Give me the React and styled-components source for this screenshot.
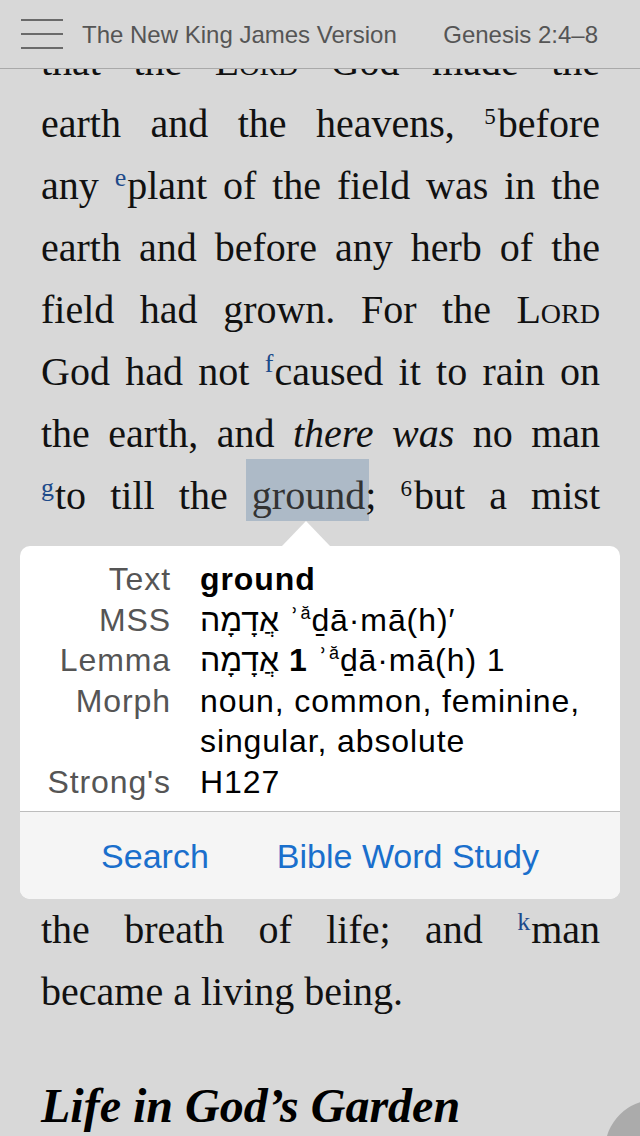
import React from 'react';
import styled, { createGlobalStyle } from 'styled-components';

const GlobalStyle = createGlobalStyle`
  html, body {
    margin: 0;
    padding: 0;
    background: #d8d8d8;
  }
`;

const Page = styled.div`
  position: relative;
  width: 640px;
  height: 1136px;
  overflow: hidden;
  background: #d8d8d8;
`;

const Header = styled.header`
  position: absolute;
  top: 0;
  left: 0;
  right: 0;
  z-index: 5;
  height: 69px;
  box-sizing: border-box;
  display: flex;
  align-items: center;
  padding: 2px 42px 0 21px;
  background: #d8d8d8;
  border-bottom: 1px solid #a9a9a9;
  font-family: "Liberation Sans", Arial, sans-serif;
  font-size: 24px;
  color: #555;
`;

const Menu = styled.svg`
  flex: none;
  margin: -2px 19px 0 0;
`;

const Title = styled.div`
  flex: 1;
`;

const Ref = styled.div`
  flex: none;
`;

const Article = styled.article`
  padding: 31px 40px 0 41px;
  font-family: "Liberation Serif", "Times New Roman", serif;
  font-size: 40px;
  color: #111;
`;

const Line = styled.div`
  height: 62px;
  line-height: 62px;
  white-space: nowrap;
  text-align: ${props => props.$last ? 'left' : 'justify'};
  text-align-last: ${props => props.$last ? 'left' : 'justify'};
`;

// lines that sit fully under the popover
const Covered = styled.div`
  height: ${props => props.$lines * 62}px;
`;

const Verse = styled.sup`
  font-size: 23px;
  line-height: 0;
  vertical-align: 13px;
  margin-right: 2px;
  color: #111;
`;

const Note = styled.sup`
  font-size: 26px;
  line-height: 0;
  vertical-align: 13px;
  margin-right: 1px;
  color: #1d4a8a;
`;

const Lord = styled.span`
  font-variant: small-caps;
`;

const Em = styled.em`
  font-style: italic;
`;

const Mark = styled.span`
  background: #adbac7;
  color: #333;
  padding: 14px 4px 3px 6px;
  margin: 0 -4px 0 -6px;
`;

const Heading = styled.h2`
  margin: 53px 0 0;
  font-family: "Liberation Serif", "Times New Roman", serif;
  font-weight: bold;
  font-style: italic;
  font-size: 48px;
  line-height: 60px;
  color: #000;
`;

const Popover = styled.div`
  position: absolute;
  z-index: 4;
  left: 20px;
  top: 546px;
  width: 600px;
  border-radius: 10px;
  background: #fff;
  font-family: "Liberation Sans", Arial, "DejaVu Sans", sans-serif;
`;

const Arrow = styled.div`
  position: absolute;
  top: -25px;
  left: 262px;
  width: 0;
  height: 0;
  border-left: 24px solid transparent;
  border-right: 24px solid transparent;
  border-bottom: 25px solid #fff;
`;

const Details = styled.div`
  display: grid;
  grid-template-columns: 151px 1fr;
  column-gap: 29px;
  padding: 13px 0 9px;
  font-size: 32px;
  line-height: 40.5px;
  letter-spacing: 0.9px;
  border-bottom: 1px solid #bdbdbd;
`;

const Label = styled.div`
  text-align: right;
  color: #555;
`;

const Value = styled.div`
  color: #000;
  font-weight: ${props => props.$bold ? 'bold' : 'normal'};
`;

const Hebrew = styled.span`
  direction: rtl;
  unicode-bidi: isolate;
  letter-spacing: 0;
`;

const Bold = styled.b`
  font-weight: bold;
`;

const Small = styled.sup`
  font-size: 18px;
  line-height: 0;
  vertical-align: 12px;
`;

const Actions = styled.div`
  display: flex;
  justify-content: center;
  align-items: center;
  gap: 68px;
  height: 87px;
  padding-top: 2px;
  box-sizing: border-box;
  background: #f5f5f5;
  border-radius: 0 0 10px 10px;
`;

const Action = styled.button`
  border: 0;
  padding: 0;
  background: none;
  font-family: "Liberation Sans", Arial, sans-serif;
  font-size: 34px;
  color: #1a6fcc;
`;

const Fab = styled.div`
  position: absolute;
  right: -65px;
  bottom: -64px;
  width: 100px;
  height: 100px;
  border-radius: 50%;
  background: #ababab;
`;

const rows = [
  ['Text', <Value key="v" $bold>ground</Value>],
  ['MSS', <Value key="v"><Hebrew>אֲדָמָה</Hebrew> ʾ<Small>ă</Small>ḏā·mā(h)′</Value>],
  ['Lemma', <Value key="v"><Hebrew>אֲדָמָה</Hebrew> <Bold>1</Bold> ʾ<Small>ă</Small>ḏā·mā(h) 1</Value>],
  ['Morph', <Value key="v">noun, common, feminine,</Value>],
  ['', <Value key="v">singular, absolute</Value>],
  ["Strong's", <Value key="v">H127</Value>],
];

export default function App() {
  return (
    <Page>
      <GlobalStyle />
      <Header>
        <Menu width="42" height="30" viewBox="0 0 42 30">
          <g stroke="#6a6a6a" strokeWidth="2">
            <line x1="0" y1="1" x2="42" y2="1" />
            <line x1="0" y1="15" x2="42" y2="15" />
            <line x1="0" y1="29" x2="42" y2="29" />
          </g>
        </Menu>
        <Title>The New King James Version</Title>
        <Ref>Genesis 2:4–8</Ref>
      </Header>

      <Article>
        <Line>that the <Lord>Lord</Lord> God made the</Line>
        <Line>earth and the heavens, <Verse>5</Verse>before</Line>
        <Line>any <Note>e</Note>plant of the field was in the</Line>
        <Line>earth and before any herb of the</Line>
        <Line>field had grown. For the <Lord>Lord</Lord></Line>
        <Line>God had not <Note>f</Note>caused it to rain on</Line>
        <Line>the earth, and <Em>there was</Em> no man</Line>
        <Line><Note>g</Note>to till the <Mark>ground</Mark>; <Verse>6</Verse>but a mist</Line>
        <Covered $lines={6} />
        <Line>the breath of life; and <Note>k</Note>man</Line>
        <Line $last>became a living being.</Line>
        <Heading>Life in God’s Garden</Heading>
      </Article>

      <Popover>
        <Arrow />
        <Details>
          {rows.map(([label, value], i) => (
            <React.Fragment key={i}>
              <Label>{label}</Label>
              {value}
            </React.Fragment>
          ))}
        </Details>
        <Actions>
          <Action>Search</Action>
          <Action>Bible Word Study</Action>
        </Actions>
      </Popover>

      <Fab />
    </Page>
  );
}
